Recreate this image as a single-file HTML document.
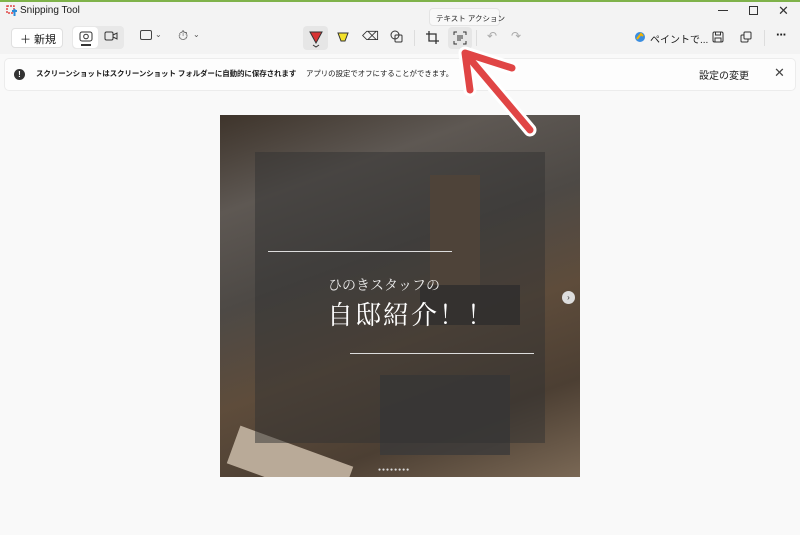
<!DOCTYPE html>
<html><head><meta charset="utf-8"><style>
*{margin:0;padding:0;box-sizing:border-box}
body{width:800px;height:535px;overflow:hidden;background:#f9f9f9;font-family:"Liberation Sans","Noto Sans CJK JP",sans-serif;position:relative;color:#1a1a1a}
.abs{position:absolute;white-space:nowrap}
.top{left:0;top:0;width:800px;height:2px;background:#7fb24a}
.t{font-size:11px}
.btn{border-radius:4px}
</style></head><body>
<div class="abs top"></div>
<div class="abs" style="left:0;top:2px;width:800px;height:52px;background:#f3f3f3"></div>
<svg class="abs" style="left:6px;top:5px" width="12" height="12"><rect x="1" y="1" width="7" height="7" fill="none" stroke="#e04848" stroke-width="1.5" stroke-dasharray="2 1"/><path d="M6 6h5M8.5 4v7" stroke="#2a8bd8" stroke-width="2"/></svg>
<div class="abs t" style="left:20px;top:5px;font-size:10px">Snipping Tool</div>
<div class="abs" style="left:718px;top:10px;width:10px;height:1px;background:#333"></div>
<div class="abs" style="left:749px;top:6px;width:9px;height:9px;border:1px solid #333"></div>
<div class="abs" style="left:778px;top:3px;font-size:13px;color:#333">✕</div>
<div class="abs btn" style="left:11px;top:28px;width:52px;height:20px;background:#fff;border:1px solid #e0e0e0;font-size:11px;padding:2px 0 0 8px">＋ 新規</div>
<div class="abs btn" style="left:72px;top:26px;width:52px;height:23px;background:#e8e8e8"></div>
<div class="abs btn" style="left:73px;top:27px;width:25px;height:21px;background:#fff"></div>
<svg class="abs" style="left:79px;top:30px" width="14" height="16"><rect x="1" y="2" width="12" height="9" rx="2" fill="none" stroke="#333"/><circle cx="7" cy="6.5" r="2.3" fill="none" stroke="#333"/><rect x="2" y="14" width="10" height="2" fill="#333"/></svg>
<svg class="abs" style="left:104px;top:31px" width="14" height="10"><rect x="1" y="1" width="8" height="8" rx="1.5" fill="none" stroke="#333"/><path d="M9 4l4-2v6l-4-2" fill="none" stroke="#333"/></svg>
<div class="abs" style="left:140px;top:30px;width:12px;height:10px;border:1px solid #444;border-radius:2px"></div><div class="abs" style="left:155px;top:30px;font-size:8px;color:#555">⌄</div>
<div class="abs" style="left:178px;top:28px;font-size:13px;color:#444">⏱</div><div class="abs" style="left:193px;top:30px;font-size:8px;color:#555">⌄</div>
<div class="abs btn" style="left:303px;top:26px;width:25px;height:24px;background:#e6e6e6"></div>
<svg class="abs" style="left:308px;top:30px" width="16" height="18"><path d="M2 2h12l-6 11z" fill="#d83434" stroke="#333"/><path d="M5 15l3 2 3-2" fill="none" stroke="#333"/></svg>
<svg class="abs" style="left:336px;top:31px" width="14" height="12"><path d="M2 2h10l-3 8H5z" fill="#f3e12a" stroke="#333"/></svg>
<div class="abs" style="left:362px;top:29px;font-size:12px;color:#333">⌫</div>
<svg class="abs" style="left:390px;top:30px" width="14" height="14"><circle cx="5" cy="5" r="4" fill="none" stroke="#333"/><rect x="5" y="5" width="7" height="7" rx="1" fill="none" stroke="#333"/></svg>
<div class="abs" style="left:414px;top:30px;width:1px;height:16px;background:#ddd"></div>
<svg class="abs" style="left:426px;top:31px" width="13" height="13"><path d="M3 0v10h10M0 3h10v10" fill="none" stroke="#333" stroke-width="1.3"/></svg>
<div class="abs btn" style="left:448px;top:27px;width:24px;height:22px;background:#e6e6e6"></div>
<svg class="abs" style="left:453px;top:31px" width="14" height="14"><path d="M1 4V1h3M10 1h3v3M13 10v3h-3M4 13H1v-3M4 5h6M4 7h6M4 9h4" fill="none" stroke="#333"/></svg>
<div class="abs" style="left:476px;top:30px;width:1px;height:16px;background:#ddd"></div>
<div class="abs" style="left:487px;top:29px;font-size:12px;color:#aaa">↶</div>
<div class="abs" style="left:511px;top:29px;font-size:12px;color:#aaa">↷</div>
<div class="abs btn" style="left:429px;top:8px;width:71px;height:18px;background:#f8f8f8;border:1px solid #e4e4e4;font-size:7.5px;padding:4px 0 0 6px;color:#222">テキスト アクション</div>
<svg class="abs" style="left:634px;top:31px" width="12" height="12"><circle cx="6" cy="6" r="5" fill="#3a8de0"/><path d="M3 8l4-5 2 2" stroke="#f4b400" stroke-width="2" fill="none"/></svg>
<div class="abs" style="left:650px;top:31px;font-size:10px">ペイントで...</div>
<svg class="abs" style="left:712px;top:31px" width="12" height="12"><rect x="1" y="1" width="10" height="10" rx="1.5" fill="none" stroke="#333"/><rect x="3.5" y="1" width="5" height="3" fill="none" stroke="#333"/><rect x="3" y="7" width="6" height="4" fill="none" stroke="#333"/></svg>
<svg class="abs" style="left:740px;top:31px" width="12" height="12"><rect x="1" y="4" width="7" height="7" rx="1" fill="none" stroke="#333"/><rect x="4" y="1" width="7" height="7" rx="1" fill="#f3f3f3" stroke="#333"/></svg>
<div class="abs" style="left:764px;top:30px;width:1px;height:16px;background:#ddd"></div>
<div class="abs" style="left:776px;top:27px;font-size:13px;font-weight:bold;letter-spacing:-1px">···</div>
<div class="abs" style="left:4px;top:58px;width:792px;height:33px;background:#fdfdfd;border:1px solid #ececec;border-radius:5px"></div>
<div class="abs" style="left:14px;top:69px;width:11px;height:11px;border-radius:50%;background:#333;color:#fff;font-size:8px;text-align:center;line-height:11px;font-weight:bold">!</div>
<div class="abs" style="left:36px;top:68px;font-size:7.5px;font-weight:bold;letter-spacing:-0.1px">スクリーンショットはスクリーンショット フォルダーに自動的に保存されます</div>
<div class="abs" style="left:306px;top:68px;font-size:7.4px">アプリの設定でオフにすることができます。</div>
<div class="abs" style="left:699px;top:67px;font-size:10px">設定の変更</div>
<div class="abs" style="left:774px;top:65px;font-size:13px;color:#444">✕</div>
<div class="abs" style="left:220px;top:115px;width:360px;height:362px;overflow:hidden;background:linear-gradient(160deg,#3e342b 0%,#5e5853 20%,#4d4945 40%,#5e4c3b 60%,#4c3f33 80%,#7a6855 100%)">
<div class="abs" style="left:210px;top:60px;width:50px;height:150px;background:#6a5440"></div>
<div class="abs" style="left:10px;top:330px;width:120px;height:40px;background:#b9aa98;transform:rotate(20deg)"></div>
<div class="abs" style="left:200px;top:170px;width:100px;height:40px;background:#2a2828;opacity:.8"></div>
<div class="abs" style="left:160px;top:260px;width:130px;height:80px;background:#3b3a3a;opacity:.8"></div>
<div class="abs" style="left:35px;top:37px;width:290px;height:291px;background:rgba(50,50,50,.5)"></div>
<div class="abs" style="left:48px;top:136px;width:184px;height:1px;background:#ddd"></div>
<div class="abs" style="left:130px;top:238px;width:184px;height:1px;background:#ddd"></div>
<div class="abs" style="left:108px;top:160px;font-size:14px;color:#eee;font-family:'Noto Serif CJK SC',serif">ひのきスタッフの</div>
<div class="abs" style="left:107px;top:180px;font-size:26px;color:#fff;font-family:'Noto Serif CJK SC',serif;letter-spacing:2px">自邸紹介！！</div>
<div class="abs" style="left:342px;top:176px;width:13px;height:13px;border-radius:50%;background:#ddd;font-size:8px;text-align:center;line-height:13px;color:#333">›</div>
<div class="abs" style="left:158px;top:352px;font-size:5px;color:#ddd;letter-spacing:1px">●●●●●●●●</div>
</div>
<svg class="abs" style="left:0;top:0" width="800" height="535"><g fill="none" stroke-linecap="round" stroke-linejoin="round"><path d="M512 68L465 53L470 90M465 53L530 130" stroke="#fff" stroke-width="13"/><path d="M512 68L465 53L470 90M465 53L530 130" stroke="#e04545" stroke-width="7"/></g></svg>
</body></html>
